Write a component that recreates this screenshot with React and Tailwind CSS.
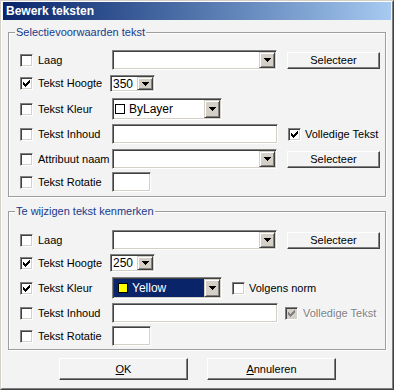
import React from 'react';

const font = "font-['Liberation_Sans',Arial,sans-serif]";

const Check = ({ color = '#000' }) => (
  <svg width="7" height="7" viewBox="0 0 7 7" shapeRendering="crispEdges">
    <path
      fill={color}
      d="M0 2h1v3H0zM1 3h1v3H1zM2 4h1v3H2zM3 3h1v3H3zM4 2h1v3H4zM5 1h1v3H5zM6 0h1v3H6z"
    />
  </svg>
);

const CheckBox = ({ checked, disabled }) => (
  <div
    className={`w-[13px] h-[13px] shrink-0 flex items-center justify-center border border-t-[#808080] border-l-[#808080] border-b-white border-r-white shadow-[inset_1px_1px_0_#404040,inset_-1px_-1px_0_#d4d0c8] ${
      disabled ? 'bg-[#d4d0c8]' : 'bg-white'
    }`}
  >
    {checked && <Check color={disabled ? '#808080' : '#000'} />}
  </div>
);

const Arrow = () => (
  <div className="w-[16px] h-full shrink-0 flex items-center justify-center bg-[#d4d0c8] border border-t-[#d4d0c8] border-l-[#d4d0c8] border-b-[#404040] border-r-[#404040] shadow-[inset_1px_1px_0_#fff,inset_-1px_-1px_0_#808080]">
    <svg width="7" height="4" viewBox="0 0 7 4" shapeRendering="crispEdges">
      <path fill="#000" d="M0 0h7v1H0zM1 1h5v1H1zM2 2h3v1H2zM3 3h1v1H3z" />
    </svg>
  </div>
);

const Sunken = ({ className = '', children }) => (
  <div
    className={`flex p-[1px] bg-white border border-t-[#808080] border-l-[#808080] border-b-white border-r-white shadow-[inset_1px_1px_0_#404040,inset_-1px_-1px_0_#d4d0c8] ${className}`}
  >
    {children}
  </div>
);

const Combo = ({ className, children }) => (
  <Sunken className={className}>
    <div className="flex-1 flex items-center min-w-0">{children}</div>
    <Arrow />
  </Sunken>
);

const Button = ({ className = '', children }) => (
  <div
    className={`flex items-center justify-center text-[11px] text-black bg-[#f3f3f3] border border-t-white border-l-white border-b-[#404040] border-r-[#404040] shadow-[inset_-1px_-1px_0_#808080] ${className}`}
  >
    {children}
  </div>
);

const Row = ({ checked, label, className = '', children }) => (
  <div className={`flex items-center pl-[11px] ${className}`}>
    <CheckBox checked={checked} />
    <span className="ml-[5px] w-[74px] text-[11px] leading-none">{label}</span>
    {children}
  </div>
);

const Group = ({ title, className = '', children }) => (
  <div
    className={`relative ml-[6px] w-[378px] border border-[#9d9d9d] shadow-[inset_1px_1px_0_#fff,1px_1px_0_#fff] ${className}`}
  >
    <span className="absolute -top-[8px] left-[6px] px-[1px] bg-[#f3f3f3] text-[11px] leading-[14px] text-[#173a8c]">
      {title}
    </span>
    {children}
  </div>
);

const ColorSwatch = ({ color }) => (
  <span className="w-[10px] h-[10px] shrink-0 border border-black" style={{ background: color }} />
);

export default function App() {
  return (
    <div className={`w-[394px] h-[390px] ${font} text-black border border-t-[#d4d0c8] border-l-[#d4d0c8] border-b-[#404040] border-r-[#404040]`}>
      <div className="h-full flex flex-col bg-[#f3f3f3] border border-t-white border-l-white border-b-[#808080] border-r-[#808080]">
        <div className="h-[18px] mx-[1px] flex items-center pl-[3px] bg-gradient-to-r from-[#0a246a] to-[#a6caf0]">
          <span className="text-white font-bold text-[12px] leading-none">Bewerk teksten</span>
        </div>

        <Group title="Selectievoorwaarden tekst" className="mt-[12px] h-[165px] pt-[17px]">
          <Row label="Laag" className="h-[20px]">
            <Combo className="w-[165px] h-[20px]" />
            <Button className="ml-[10px] w-[93px] h-[17px]">Selecteer</Button>
          </Row>
          <Row checked label="Tekst Hoogte" className="mt-[5px] h-[17px]">
            <Combo className="-ml-[2px] w-[45px] h-[17px]">
              <span className="text-[12px] leading-none pl-[1px]">350</span>
            </Combo>
          </Row>
          <Row label="Tekst Kleur" className="mt-[6px] h-[22px]">
            <Combo className="w-[110px] h-[22px]">
              <div className="flex items-center gap-[4px] pl-[1px]">
                <ColorSwatch color="#fff" />
                <span className="text-[12px] leading-none">ByLayer</span>
              </div>
            </Combo>
          </Row>
          <Row label="Tekst Inhoud" className="mt-[4px] h-[20px]">
            <Sunken className="w-[166px] h-[20px]" />
            <div className="ml-[10px] flex items-center">
              <CheckBox checked />
              <span className="ml-[4px] text-[11px] leading-none">Volledige Tekst</span>
            </div>
          </Row>
          <Row label="Attribuut naam" className="mt-[5px] h-[20px]">
            <Combo className="w-[165px] h-[20px]" />
            <Button className="ml-[10px] w-[93px] h-[17px]">Selecteer</Button>
          </Row>
          <Row label="Tekst Rotatie" className="mt-[3px] h-[20px]">
            <Sunken className="w-[39px] h-[20px]" />
          </Row>
        </Group>

        <Group title="Te wijzigen tekst kenmerken" className="mt-[14px] h-[139px] pt-[18px]">
          <Row label="Laag" className="h-[20px]">
            <Combo className="w-[165px] h-[20px]" />
            <Button className="ml-[10px] w-[93px] h-[17px]">Selecteer</Button>
          </Row>
          <Row checked label="Tekst Hoogte" className="mt-[4px] h-[18px]">
            <Combo className="-ml-[2px] w-[45px] h-[18px]">
              <span className="text-[12px] leading-none pl-[1px]">250</span>
            </Combo>
          </Row>
          <Row checked label="Tekst Kleur" className="mt-[5px] h-[22px]">
            <Combo className="w-[110px] h-[22px]">
              <div className="h-full w-full flex items-center gap-[4px] pl-[4px] bg-[#0a246a]">
                <ColorSwatch color="#ffff00" />
                <span className="text-[12px] leading-none text-white">Yellow</span>
              </div>
            </Combo>
            <div className="ml-[10px] flex items-center">
              <CheckBox />
              <span className="ml-[4px] text-[11px] leading-none">Volgens norm</span>
            </div>
          </Row>
          <Row label="Tekst Inhoud" className="mt-[4px] h-[20px]">
            <Sunken className="w-[166px] h-[20px]" />
            <div className="ml-[7px] flex items-center">
              <CheckBox checked disabled />
              <span className="ml-[5px] text-[11px] leading-none text-[#808080] [text-shadow:1px_1px_0_#fff]">
                Volledige Tekst
              </span>
            </div>
          </Row>
          <Row label="Tekst Rotatie" className="mt-[3px] h-[20px]">
            <Sunken className="w-[39px] h-[20px]" />
          </Row>
        </Group>

        <div className="mt-[8px] ml-[57px] flex gap-[19px]">
          <Button className="w-[129px] h-[22px]">
            <span className="underline">O</span>K
          </Button>
          <Button className="w-[129px] h-[22px]">
            <span className="underline">A</span>nnuleren
          </Button>
        </div>
      </div>
    </div>
  );
}
